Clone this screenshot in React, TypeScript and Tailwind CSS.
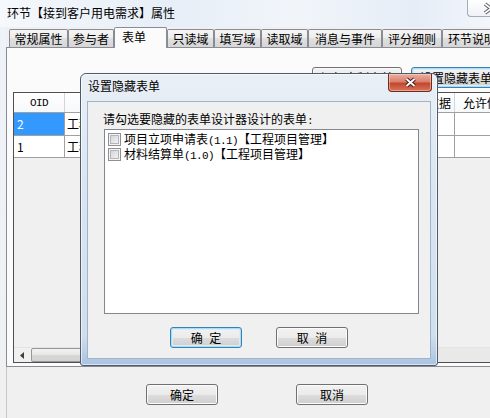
import React from "react";

const MONO = "font-['Liberation_Mono',monospace] text-[11px] tracking-[-0.6px]";

function WinButton({
  children,
  focused,
  className,
}: {
  children: React.ReactNode;
  focused?: boolean;
  className?: string;
}) {
  return (
    <div
      className={`flex h-[21px] shrink-0 items-center justify-center rounded-[3px] border bg-[linear-gradient(to_bottom,#f2f2f2_0%,#ebebeb_50%,#dddddd_50%,#cfcfcf_100%)] ${
        focused
          ? "border-[#3c7fb1] shadow-[inset_0_0_0_1px_#a9dcf5,inset_0_0_0_2px_#d6eefa]"
          : "border-[#707070] shadow-[inset_0_0_0_1px_#fbfbfb]"
      } ${className ?? ""}`}
    >
      {children}
    </div>
  );
}

function Tab({
  label,
  className,
  selected,
}: {
  label: string;
  className: string;
  selected?: boolean;
}) {
  if (selected) {
    return (
      <div
        className={`relative z-10 -mb-[1px] flex h-[21px] shrink-0 items-start rounded-t-[2px] border border-b-0 border-[#898c95] bg-[#fbfbfb] pl-[7px] pt-[2px] ${className}`}
      >
        {label}
      </div>
    );
  }
  return (
    <div
      className={`flex h-[18px] shrink-0 items-center justify-center rounded-t-[2px] border border-b-0 border-[#898c95] bg-[linear-gradient(to_bottom,#f5f5f5,#ececec_50%,#e0e0e0_50%,#d6d6d6)] pt-[1px] ${className}`}
    >
      {label}
    </div>
  );
}

function Check() {
  return (
    <div className="h-[13px] w-[13px] shrink-0 border border-[#8f8f8f] bg-[#f4f4f4] p-[1px]">
      <div className="h-full w-full border border-[#b3b6ba] bg-[linear-gradient(135deg,#d3d5d8,#f2f2f3)]" />
    </div>
  );
}

export default function App() {
  return (
    <div className="relative h-[418px] w-[490px] overflow-hidden bg-[#f0f0f0] font-['Noto_Sans_CJK_SC','Noto_Sans',sans-serif] text-[12px] leading-[14px] text-black">
      {/* main title bar */}
      <div className="flex h-[27px] items-start justify-between bg-[linear-gradient(to_right,#f5f8fc,#e7eef7_35%,#f1f5fa_60%,#e6edf7_85%,#f2f6fb)]">
        <div className="pl-[7px] pt-[6px]">环节【接到客户用电需求】属性</div>
        <div className="h-[17px] w-[23px] shrink-0 overflow-hidden rounded-bl-[4px] border-b border-l border-[#a3abb6] bg-[linear-gradient(to_bottom,#ffffff,#eef2f6)]">
          <svg width="23" height="16" viewBox="0 0 23 16">
            <path d="M17 4 L29 13 M17 13 L29 4" stroke="#5d636b" strokeWidth="3.6" />
            <path d="M17 4 L29 13 M17 13 L29 4" stroke="#ffffff" strokeWidth="1.6" />
          </svg>
        </div>
      </div>

      <div className="flex h-[391px]">
        {/* left frame strip */}
        <div className="w-[6px] shrink-0 bg-[linear-gradient(to_bottom,#eef3f9,#f0f0f0)]" />

        <div className="flex min-w-0 flex-1 flex-col">
          {/* tabs */}
          <div className="flex h-[20px] items-end pl-[3px]">
            <Tab label="常规属性" className="w-[59px]" />
            <Tab label="参与者" className="w-[46px]" />
            <Tab label="表单" className="w-[53px]" selected />
            <Tab label="只读域" className="w-[47px]" />
            <Tab label="填写域" className="w-[47px]" />
            <Tab label="读取域" className="w-[47px]" />
            <Tab label="消息与事件" className="w-[74px]" />
            <Tab label="评分细则" className="w-[60px]" />
            <Tab label="环节说明" className="w-[60px]" />
          </div>

          {/* tab page */}
          <div className="flex h-[320px] shrink-0 flex-col border-b border-l border-t border-[#898c95] bg-[#fbfbfb]">
            <div className="flex gap-[9px] pl-[305px] pt-[19px]">
              <WinButton className="w-[90px]">添加定制表单</WinButton>
              <WinButton className="w-[90px]" focused>
                设置隐藏表单
              </WinButton>
            </div>

            {/* data grid */}
            <div className="ml-[6px] mt-[4px] flex h-[271px] w-[500px] shrink-0 flex-col overflow-hidden border border-[#505050] bg-[#f0f0f0]">
              <div className="flex h-[20px] shrink-0 border-b border-[#a0a0a0] bg-[linear-gradient(to_bottom,#ffffff,#f7f8fa)]">
                <div className={`flex w-[51px] shrink-0 items-center justify-center border-r border-[#d5d5d5] ${MONO}`}>OID</div>
                <div className="flex w-[226px] shrink-0 items-center justify-center border-r border-[#d5d5d5]">表单名称</div>
                <div className="flex w-[101px] shrink-0 items-center justify-center border-r border-[#d5d5d5]">表单版本</div>
                <div className="flex w-[63px] shrink-0 items-center justify-end border-r border-[#d5d5d5] pr-[3px]">引用数据</div>
                <div className="flex w-[80px] shrink-0 items-center border-r border-[#d5d5d5] pl-[8px]">允许修改</div>
              </div>
              <div className="flex h-[23px] shrink-0 border-b border-[#a0a0a0]">
                <div className="flex w-[51px] shrink-0 items-center border-r border-[#a0a0a0] bg-[#3399ff] pl-[3px] text-white">2</div>
                <div className="flex w-[226px] shrink-0 items-center border-r border-[#a0a0a0] bg-white pl-[2px]">工程项目立项申请表</div>
                <div className="w-[101px] shrink-0 border-r border-[#a0a0a0] bg-white" />
                <div className="w-[63px] shrink-0 border-r border-[#a0a0a0] bg-white" />
                <div className="w-[80px] shrink-0 border-r border-[#a0a0a0] bg-white" />
              </div>
              <div className="flex h-[22px] shrink-0 border-b border-[#a0a0a0]">
                <div className="flex w-[51px] shrink-0 items-center border-r border-[#a0a0a0] bg-white pl-[3px]">1</div>
                <div className="flex w-[226px] shrink-0 items-center border-r border-[#a0a0a0] bg-white pl-[2px]">工程材料结算单</div>
                <div className="w-[101px] shrink-0 border-r border-[#a0a0a0] bg-white" />
                <div className="w-[63px] shrink-0 border-r border-[#a0a0a0] bg-white" />
                <div className="w-[80px] shrink-0 border-r border-[#a0a0a0] bg-white" />
              </div>
              <div className="flex-1" />
              {/* horizontal scrollbar */}
              <div className="flex h-[15px] shrink-0 items-stretch border-t border-[#e3e3e3] bg-[#e9e9e9]">
                <div className="flex w-[17px] shrink-0 items-center justify-center bg-[#f0f0f0]">
                  <svg width="5" height="7" viewBox="0 0 5 7">
                    <path d="M4 0 L0 3.5 L4 7 Z" fill="#404040" />
                  </svg>
                </div>
                <div className="w-[110px] shrink-0 rounded-[2px] border border-[#979797] bg-[linear-gradient(to_bottom,#f3f3f3,#e6e6e6_50%,#d8d8d8_50%,#d2d2d2)]" />
              </div>
            </div>
          </div>

          {/* bottom buttons */}
          <div className="flex flex-1 gap-[78px] border-l border-[#c8c8c8] pl-[139px] pt-[17px]">
            <WinButton className="w-[72px]">确定</WinButton>
            <WinButton className="w-[72px]">取消</WinButton>
          </div>
        </div>
      </div>

      {/* modal dialog */}
      <div className="absolute left-[80px] top-[73px] z-20 flex h-[293px] w-[358px] flex-col rounded-t-[6px] rounded-b-[3px] border border-[#4f5b69] bg-[linear-gradient(to_bottom,#e9eff6,#dae5f1_40%,#d0deed_90%,#a9c3e1)] shadow-[inset_0_0_0_1px_rgba(255,255,255,0.6)]">
        <div className="flex h-[27px] shrink-0 items-start justify-between">
          <div className="pl-[7px] pt-[5px]">设置隐藏表单</div>
          <div className="mr-[5px] flex h-[18px] w-[44px] shrink-0 items-center justify-center rounded-b-[4px] border border-t-0 border-[#6e2b21] bg-[#c9553f] bg-[linear-gradient(to_bottom,#eab0a2,#d8806c_45%,#c4472f_55%,#d7745a)] shadow-[inset_0_0_0_1px_rgba(255,230,220,0.45)]">
            <svg width="13" height="11" viewBox="0 0 13 11">
              <path d="M2.5 2 L10.5 9 M10.5 2 L2.5 9" stroke="#4a1a14" strokeWidth="3.8" />
              <path d="M2.5 2 L10.5 9 M10.5 2 L2.5 9" stroke="#ffffff" strokeWidth="1.9" />
            </svg>
          </div>
        </div>
        <div className="mx-[6px] flex h-[258px] shrink-0 flex-col border border-[#9fb3c9] bg-[#f0f0f0]">
          <div className="pl-[15px] pt-[10px]">
            请勾选要隐藏的表单设计器设计的表单<span className={MONO}>:</span>
          </div>
          <div className="ml-[16px] mt-[1px] h-[185px] w-[315px] shrink-0 border border-[#828790] bg-white pt-[2px]">
            <div className="flex h-[15px] items-center gap-[3px] pl-[3px]">
              <Check />
              <span>
                项目立项申请表<span className={MONO}>(1.1)</span>【工程项目管理】
              </span>
            </div>
            <div className="flex h-[15px] items-center gap-[3px] pl-[3px]">
              <Check />
              <span>
                材料结算单<span className={MONO}>(1.0)</span>【工程项目管理】
              </span>
            </div>
          </div>
          <div className="mt-[13px] flex justify-center gap-[34px]">
            <WinButton className="w-[72px] [word-spacing:4px]" focused>
              确 定
            </WinButton>
            <WinButton className="w-[72px] [word-spacing:4px]">取 消</WinButton>
          </div>
        </div>
      </div>
    </div>
  );
}
